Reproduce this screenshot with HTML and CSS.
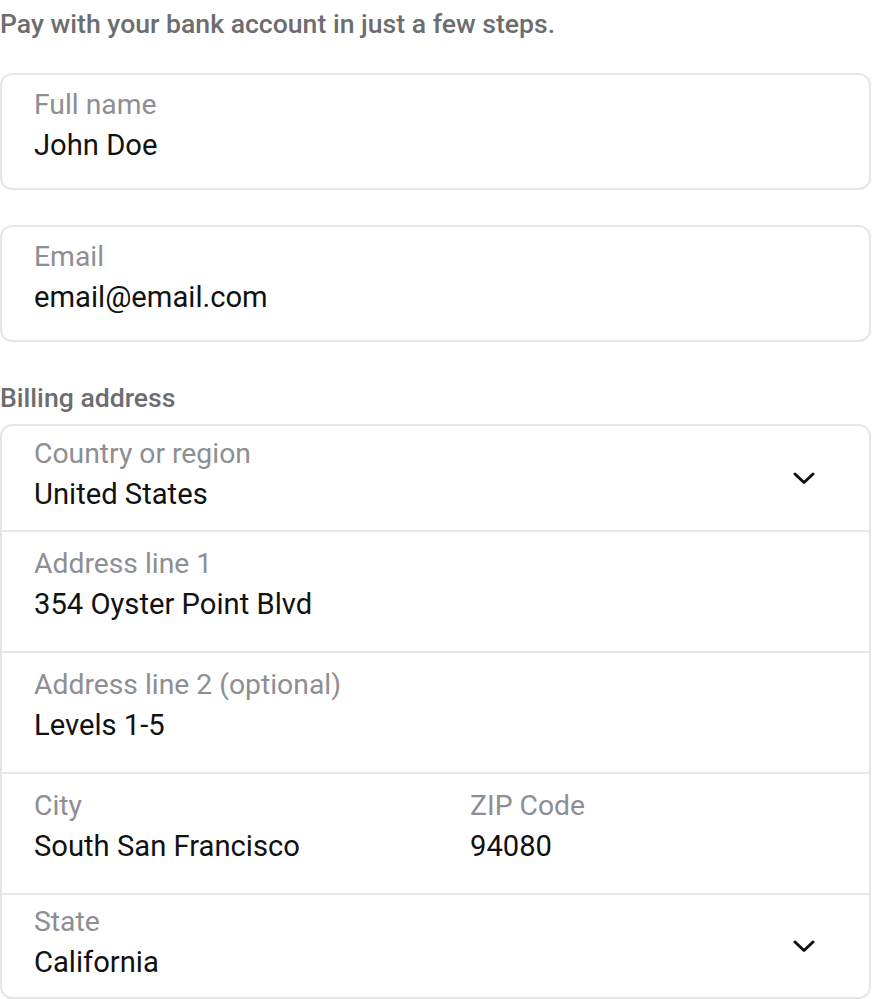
FILE: index.html
```html
<!DOCTYPE html>
<html>
<head>
<meta charset="utf-8">
<link rel="stylesheet" href="styles.css">
</head>
<body>
<div class="page">
  <p class="intro">Pay with your bank account in just a few steps.</p>

  <div class="box field">
    <div class="label">Full name</div>
    <div class="value">John Doe</div>
  </div>

  <div class="box field email">
    <div class="label">Email</div>
    <div class="value">email@email.com</div>
  </div>

  <p class="section">Billing address</p>

  <div class="box address">
    <div class="row select">
      <div class="texts">
        <div class="label">Country or region</div>
        <div class="value">United States</div>
      </div>
      <svg class="chev" width="22" height="14" viewBox="0 0 22 14"><path d="M2 2 L11 10.5 L20 2" fill="none" stroke="#111" stroke-width="3" stroke-linecap="round" stroke-linejoin="round"/></svg>
    </div>
    <div class="row text">
      <div class="label">Address line 1</div>
      <div class="value">354 Oyster Point Blvd</div>
    </div>
    <div class="row text">
      <div class="label">Address line 2 (optional)</div>
      <div class="value">Levels 1-5</div>
    </div>
    <div class="row text split">
      <div class="col">
        <div class="label">City</div>
        <div class="value">South San Francisco</div>
      </div>
      <div class="col">
        <div class="label">ZIP Code</div>
        <div class="value">94080</div>
      </div>
    </div>
    <div class="row select">
      <div class="texts">
        <div class="label">State</div>
        <div class="value">California</div>
      </div>
      <svg class="chev" width="22" height="14" viewBox="0 0 22 14"><path d="M2 2 L11 10.5 L20 2" fill="none" stroke="#111" stroke-width="3" stroke-linecap="round" stroke-linejoin="round"/></svg>
    </div>
  </div>
</div>
</body>
</html>
```

FILE: styles.css
```css
* { box-sizing: border-box; }
html, body { margin: 0; padding: 0; background: #fff; }
body {
  font-family: Roboto, "Noto Sans", "Liberation Sans", sans-serif;
  color: #111;
}
.page {
  width: 872px;
  padding: 8px 0 0 0;
}
.intro {
  margin: 0 0 33px 0;
  font-size: 26.6px;
  line-height: 32px;
  font-weight: 500;
  color: #6d6d70;
}
.section {
  margin: 40px 0 10px 0;
  font-size: 26.6px;
  line-height: 32px;
  font-weight: 500;
  color: #6d6d70;
}
.box {
  width: 871px;
  border: 2px solid #e6e6e8;
  border-radius: 12px;
  background: #fff;
}
.field {
  padding: 13px 32px 20px 32px;
  height: 117px;
}
.email { margin-top: 35px; }
.label {
  font-size: 28.3px;
  line-height: 34px;
  color: #8e8e93;
}
.value {
  font-size: 29.2px;
  line-height: 46px;
  color: #111;
}
.address .row {
  border-top: 2px solid #e6e6e8;
  padding: 0 32px;
}
.address .row:first-child { border-top: none; }
.row.select {
  display: flex;
  align-items: center;
  justify-content: space-between;
  padding-top: 11px;
  padding-bottom: 13px;
  padding-right: 54px;
}
.row.select:first-child { height: 104px; }
.row.select:last-child { height: 104px; }
.row.text {
  height: 121px;
  padding-top: 15px;
}
.row.split {
  display: grid;
  grid-template-columns: 436px 1fr;
}
.chev { display: block; margin-top: 4px; }
```
